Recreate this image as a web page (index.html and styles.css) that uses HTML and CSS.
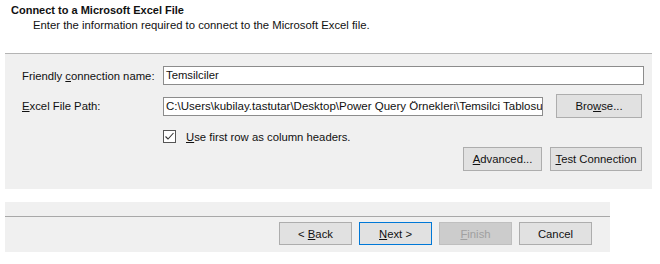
FILE: index.html
```html
<!DOCTYPE html>
<html>
<head>
<meta charset="utf-8">
<link rel="stylesheet" href="styles.css">
</head>
<body>
<div class="header">
  <div class="title">Connect to a Microsoft Excel File</div>
  <div class="subtitle">Enter the information required to connect to the Microsoft Excel file.</div>
</div>
<div class="panel">
  <div class="row row-name">
    <label class="label">Friendly <u>c</u>onnection name:</label>
    <div class="input input-wide">Temsilciler</div>
  </div>
  <div class="row row-path">
    <label class="label"><u>E</u>xcel File Path:</label>
    <div class="input input-path">C:\Users\kubilay.tastutar\Desktop\Power Query Örnekleri\Temsilci Tablosu</div>
    <button class="btn btn-browse">Bro<u>w</u>se...</button>
  </div>
  <div class="row row-check">
    <span class="check"><svg width="11" height="11" viewBox="0 0 11 11"><path d="M1.5 5.5 L4 8 L9.5 2" fill="none" stroke="#333" stroke-width="1.1"/></svg></span>
    <span class="check-label"><u>U</u>se first row as column headers.</span>
  </div>
  <div class="row row-actions">
    <button class="btn btn-adv"><u>A</u>dvanced...</button>
    <button class="btn btn-test"><u>T</u>est Connection</button>
  </div>
</div>
<div class="footer">
  <div class="footer-top"></div>
  <div class="footer-buttons">
    <button class="btn btn-nav">&lt; <u>B</u>ack</button>
    <button class="btn btn-nav btn-next"><u>N</u>ext &gt;</button>
    <button class="btn btn-nav btn-disabled"><u>F</u>inish</button>
    <button class="btn btn-nav">Cancel</button>
  </div>
</div>
</body>
</html>
```
FILE: styles.css
```css
* { box-sizing: border-box; }
body {
  margin: 0;
  background: #fff;
  font-family: "Liberation Sans", Arial, sans-serif;
  font-size: 11.3px;
  color: #111;
  width: 660px;
  height: 264px;
  overflow: hidden;
}
u { text-decoration: underline; text-underline-offset: 1px; }
.header { padding: 3px 0 0 11px; height: 53px; }
.title { font-weight: bold; font-size: 11px; line-height: 14px; }
.subtitle { padding-left: 22px; line-height: 15px; margin-top: 1px; }
.panel {
  margin-left: 5px;
  width: 647px;
  height: 136px;
  background: #f0f0f0;
  border-top: 1px solid #b4b4b4;
  padding: 12px 0 0 17px;
  display: flex;
  flex-direction: column;
}
.row { display: flex; align-items: center; }
.label { width: 141px; }
.input {
  height: 19px;
  border: 1px solid #8c8c8c;
  background: #fff;
  padding: 0 0 0 2px;
  line-height: 17px;
  white-space: nowrap;
  overflow: hidden;
  font-size: 11.3px;
}
.input-wide { width: 481px; }
.row-path { margin-top: 9px; }
.input-path { width: 380px; font-size: 11.5px; }
.btn {
  font-family: inherit;
  font-size: 11.3px;
  color: #111;
  background: #e1e1e1;
  border: 1px solid #adadad;
  padding: 0;
  height: 24px;
}
.btn-browse { width: 86px; margin-left: 13px; }
.row-check { margin-top: 12px; padding-left: 141px; }
.check {
  width: 13px; height: 13px;
  border: 1px solid #555;
  background: #fff;
  display: inline-flex; align-items: center; justify-content: center;
}
.check-label { margin-left: 10px; }
.row-actions { margin-top: 4px; justify-content: flex-end; padding-right: 10px; gap: 8px; }
.btn-adv { width: 79px; }
.btn-test { width: 92px; }
.footer {
  margin: 13px 0 0 5px;
  width: 605px;
  height: 50px;
  background: #f0f0f0;
}
.footer-top { height: 15px; border-bottom: 1px solid #a8a8a8; }
.footer-buttons { display: flex; gap: 7px; padding: 5px 0 0 274px; }
.btn-nav { width: 73px; height: 23px; }
.btn-next { border-color: #0078d7; }
.btn-disabled { background: #cccccc; border-color: #bfbfbf; color: #a0a0a0; }
```
